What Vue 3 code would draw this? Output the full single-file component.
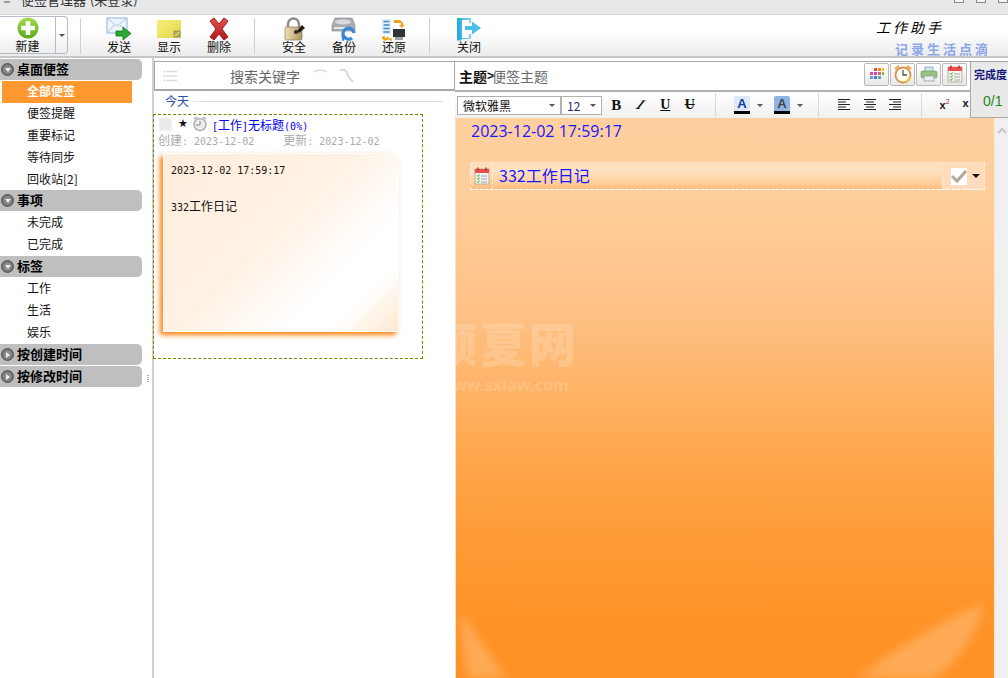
<script setup>
const groups = [
  { title: '桌面便签', open: true, items: ['全部便签', '便签提醒', '重要标记', '等待同步', '回收站[2]'], active: 0, tight: true },
  { title: '事项', open: true, items: ['未完成', '已完成'] },
  { title: '标签', open: true, items: ['工作', '生活', '娱乐'] },
  { title: '按创建时间', open: false, items: [] },
  { title: '按修改时间', open: false, items: [] }
]
</script>

<template>
  <div class="app">
    <header class="titlebar">
      <span class="win-icon"></span>
      <span class="title">便签管理器 (未登录)</span>
      <span class="win-btns"><i></i><i></i><i></i></span>
    </header>

    <div class="toolbar">
      <div class="split">
        <button class="split-main">
          <svg width="24" height="24" viewBox="0 0 24 24">
            <defs><linearGradient id="gn" x1="0" y1="0" x2="0" y2="1"><stop offset="0" stop-color="#a8dc50"/><stop offset="1" stop-color="#5aa818"/></linearGradient></defs>
            <circle cx="12" cy="12" r="11.5" fill="url(#gn)"/>
            <path d="M9.500 4.500h5v5h5v5h-5v5h-5v-5h-5v-5h5z" fill="#fff"/>
          </svg>
          <span>新建</span>
        </button>
        <span class="split-caret"><i class="caret"></i></span>
      </div>
      <span class="sep first"></span>
      <button class="tool">
        <svg width="26" height="24" viewBox="0 0 26 24">
          <rect x="1" y="1" width="20" height="15" fill="#eef4fc" stroke="#8fb0dc"/>
          <path d="M1 1l10 8 10-8M1 16l7-8M21 16l-7-8" fill="none" stroke="#a8c4e8"/>
          <path d="M10 14h7v-4l8 6.500-8 6.500v-4h-7z" fill="#2ea82e" stroke="#0f7a18" stroke-width=".8"/>
        </svg>
        <span>发送</span>
      </button>
      <button class="tool">
        <svg width="26" height="24" viewBox="0 0 26 24">
          <defs><linearGradient id="yl" x1="0" y1="0" x2="1" y2="1"><stop offset="0" stop-color="#f7ef78"/><stop offset="1" stop-color="#e4d64c"/></linearGradient></defs>
          <rect x="1" y="3" width="24" height="18" fill="url(#yl)"/>
          <rect x="18" y="14" width="6" height="6" fill="#b8ad58" stroke="#8a8550" stroke-width=".7"/>
          <path d="M19 19l4-4" stroke="#f5efa0"/>
        </svg>
        <span>显示</span>
      </button>
      <button class="tool">
        <svg width="26" height="24" viewBox="0 0 26 24">
          <defs><linearGradient id="rd" x1="0" y1="0" x2="0" y2="1"><stop offset="0" stop-color="#e85050"/><stop offset="1" stop-color="#b01818"/></linearGradient></defs>
          <path d="M4 4l4-3 5 6 5-6 4 3-6 8 6 8-4 3-5-6-5 6-4-3 6-8z" fill="url(#rd)" stroke="#9a2020" stroke-linejoin="round"/>
        </svg>
        <span>删除</span>
      </button>
      <span class="sep"></span>
      <button class="tool">
        <svg width="26" height="24" viewBox="0 0 26 24">
          <defs><linearGradient id="lk" x1="0" y1="0" x2="1" y2="0"><stop offset="0" stop-color="#f0e0b8"/><stop offset="1" stop-color="#b09464"/></linearGradient></defs>
          <path d="M7 11V7a5.500 5.500 0 0 1 11 0v4" fill="none" stroke="#8c8c88" stroke-width="2.500"/>
          <rect x="4" y="10" width="17" height="13" rx="1.500" fill="url(#lk)" stroke="#8a7858" stroke-width=".7"/>
          <path d="M16 14l5-6 3 3-6 5z" fill="#1c1c1c"/>
          <circle cx="15" cy="15" r="2" fill="#2a2a2a"/>
        </svg>
        <span>安全</span>
      </button>
      <button class="tool">
        <svg width="26" height="24" viewBox="0 0 26 24">
          <path d="M4 1h17l3 7v6H1V8z" fill="#a8acae" stroke="#8c9092" stroke-width=".7"/>
          <ellipse cx="12" cy="5" rx="8" ry="2.500" fill="#d8dadc"/>
          <rect x="3" y="10" width="12" height="2" fill="#e6e8ea"/>
          <path d="M23 16a5.500 5.500 0 1 0-2 5" fill="none" stroke="#3a86d8" stroke-width="3.200"/>
          <path d="M13 15l5-5v7z" fill="#3a86d8" transform="rotate(170 17 16) translate(6 -2)"/>
        </svg>
        <span>备份</span>
      </button>
      <button class="tool">
        <svg width="26" height="24" viewBox="0 0 26 24">
          <rect x="1" y="2" width="9" height="15" fill="#dcecf8"/>
          <path d="M2.500 4.500h6M2.500 8h6M2.500 11.500h6M2.500 15h6" stroke="#3d8ac8" stroke-width="1.500"/>
          <path d="M13 3h6l3 3v2l2-1-3 4-3-3 2 0v-2h-7z" fill="#f0a010"/>
          <path d="M3 19v3h7v1l-1 0 0 0M1 20l3 3 3-3" fill="none" stroke="#f0a010" stroke-width="1.600"/>
          <rect x="12" y="12" width="12" height="8" fill="#303438"/>
          <rect x="14" y="20" width="8" height="3" fill="#9ca0a2"/>
        </svg>
        <span>还原</span>
      </button>
      <span class="sep"></span>
      <button class="tool">
        <svg width="26" height="24" viewBox="0 0 26 24">
          <defs><linearGradient id="dr" x1="0" y1="0" x2="1" y2="0"><stop offset="0" stop-color="#1ea8d8"/><stop offset="1" stop-color="#80d8f0"/></linearGradient></defs>
          <path d="M1 1h14v5h-2V3H6v18h7v-4h2v5H6l-1 1.500H1z" fill="url(#dr)"/>
          <path d="M9 9h7V4.500L25 11l-9 6.500V13H9z" fill="#4cc0e4"/>
        </svg>
        <span>关闭</span>
      </button>
      <div class="brand">
        <div class="brand-a">工作助手</div>
        <div class="brand-b">记录生活点滴</div>
      </div>
    </div>

    <div class="main">
      <aside class="sidebar">
        <section v-for="g in groups" :key="g.title" :class="{ tight: g.tight }">
          <div class="ghead">
            <span class="ball"><i :class="g.open ? 'down' : 'right'"></i></span>
            <b>{{ g.title }}</b>
          </div>
          <div
            v-for="(it, i) in g.items"
            :key="it"
            class="gitem"
            :class="{ active: g.active === i }"
          >{{ it }}</div>
        </section>
      </aside>

      <div class="splitter"><span class="grip"></span></div>

      <section class="list">
        <div class="search">
          <svg class="menu-ic" width="14" height="12" viewBox="0 0 14 12"><path d="M3 1.500h11M3 6h11M3 10.500h11M0 1.500h2M0 6h2M0 10.500h2" stroke="#dcdcdc" stroke-width="1.300"/></svg>
          <span class="search-text">搜索关键字</span>
          <svg class="find-ic" width="42" height="16" viewBox="0 0 42 16"><path d="M1 4q6-4 13 0" fill="none" stroke="#dddddd" stroke-width="1.600"/><path d="M27 2q6-1 7 3t6 9" fill="none" stroke="#d8d8d8" stroke-width="2"/></svg>
        </div>
        <div class="today"><span>今天</span><i></i></div>
        <article class="entry">
          <div class="entry-top">
            <span class="chk"></span>
            <span class="star">★</span>
            <svg width="16" height="16" viewBox="0 0 16 16"><circle cx="8" cy="8.500" r="6" fill="#eee" stroke="#b0b0b0" stroke-width="1.600"/><path d="M8 5v4H4" fill="none" stroke="#888"/><path d="M2 3l3-2M14 3l-3-2" stroke="#bbb" stroke-width="2"/></svg>
            <span class="entry-title"><span class="lat">[</span>工作<span class="lat">]</span>无标题<span class="lat">(0%)</span></span>
          </div>
          <div class="entry-meta">
            <span>创建<span class="lat">: 2023-12-02</span></span>
            <span>更新<span class="lat">: 2023-12-02</span></span>
          </div>
          <div class="note">
            <div class="note-date">2023-12-02 17:59:17</div>
            <div class="note-body"><span class="lat">332</span>工作日记</div>
          </div>
        </article>
      </section>

      <section class="editor">
        <div class="editor-top">
          <div class="editor-bars">
            <div class="subject">
              <span class="crumb"><b>主题</b><b class="gt">&gt;</b><span>便签主题</span></span>
              <div class="sub-btns">
                <button class="sq">
                  <svg width="16" height="16" viewBox="0 0 16 16"><rect x="5" y="2" width="3" height="3" fill="#e84848"/><rect x="9" y="2" width="3" height="3" fill="#f08a20"/><rect x="13" y="2" width="2" height="3" fill="#f0c020"/><rect x="1" y="6" width="3" height="3" fill="#e84890"/><rect x="5" y="6" width="3" height="3" fill="#c048c8"/><rect x="9" y="6" width="3" height="3" fill="#e86060"/><rect x="13" y="6" width="2" height="3" fill="#70c040"/><rect x="1" y="10" width="3" height="3" fill="#50a8e0"/><rect x="5" y="10" width="3" height="3" fill="#8060e0"/><rect x="9" y="10" width="3" height="3" fill="#40b8a0"/></svg>
                </button>
                <button class="sq">
                  <svg width="20" height="20" viewBox="0 0 20 20"><path d="M2 5l4-3M18 5l-4-3" stroke="#e8b060" stroke-width="2.500"/><circle cx="10" cy="11" r="7.500" fill="#fffdf4" stroke="#d89050" stroke-width="1.800"/><path d="M10 6v5h4" fill="none" stroke="#505050" stroke-width="1.300"/><path d="M12 18l5-6 1.500 1.500-5 6z" fill="#f0c040"/></svg>
                </button>
                <button class="sq">
                  <svg width="18" height="16" viewBox="0 0 18 16"><rect x="5" y="1" width="8" height="5" fill="#d0e8f0" stroke="#70a0b0" stroke-width=".7"/><rect x="1" y="5" width="16" height="7" rx="1.500" fill="#98c080" stroke="#78987c" stroke-width=".7"/><rect x="4" y="10" width="10" height="5" fill="#e8eef0" stroke="#909898" stroke-width=".7"/></svg>
                </button>
                <button class="sq">
                  <svg class="cal" width="16" height="18" viewBox="0 0 16 18"><rect x="1" y="2" width="14" height="15" fill="#f4f2ea" stroke="#a09888" stroke-width=".7"/><rect x="1" y="2" width="14" height="4" fill="#e85050"/><path d="M4 0.500v3M12 0.500v3" stroke="#b03030" stroke-width="1.400"/><path d="M3 8.500l1 1 1.500-2M3 11.500l1 1 1.500-2M3 14.500l1 1 1.500-2" fill="none" stroke="#28a028"/><path d="M7 9h6M7 12h6M7 15h6" stroke="#a0a8b0"/></svg>
                </button>
              </div>
            </div>
            <div class="format">
              <div class="select font"><span>微软雅黑</span><i class="caret"></i></div>
              <div class="select size"><span>12</span><i class="caret"></i></div>
              <span class="fmt fb">B</span>
              <span class="fmt fi"><span>I</span></span>
              <span class="fmt fu">U</span>
              <span class="fmt fs">U</span>
              <span class="vsep"></span>
              <span class="color-a"><b>A</b></span><i class="caret gap"></i>
              <span class="color-a shade"><b>A</b></span><i class="caret gap"></i>
              <span class="vsep two"></span>
              <svg class="al" width="12" height="12" viewBox="0 0 12 12"><path d="M0 .5h12M0 3h8M0 5.500h12M0 8h8M0 10.500h12" stroke="#222"/></svg>
              <svg class="al" width="12" height="12" viewBox="0 0 12 12"><path d="M0 .5h12M2 3h8M0 5.500h12M2 8h8M0 10.500h12" stroke="#222"/></svg>
              <svg class="al" width="12" height="12" viewBox="0 0 12 12"><path d="M0 .5h12M4 3h8M0 5.500h12M4 8h8M0 10.500h12" stroke="#222"/></svg>
              <span class="vsep three"></span>
              <span class="sup">x<sup>2</sup></span>
              <span class="sub">x</span>
            </div>
          </div>
          <div class="done">
            <div class="done-title">完成度</div>
            <div class="done-num">0/1</div>
          </div>
        </div>

        <div class="editor-body">
          <div class="canvas">
            <svg class="glow" width="540" height="80" viewBox="0 0 540 80" aria-hidden="true">
              <defs><filter id="bl" x="-30%" y="-30%" width="160%" height="160%"><feGaussianBlur stdDeviation="5"/></filter></defs>
              <path d="M4 14Q30 50 50 80L12 80Q6 45 4 14z" fill="#ffc890" opacity=".45" filter="url(#bl)"/>
              <path d="M526 6Q525 40 480 80L402 80Q450 40 526 6z" fill="#ffc890" opacity=".45" filter="url(#bl)"/>
            </svg>
            <div class="mark">
              <div class="mark-cn">硕夏网</div>
              <div class="mark-en">www.sxiaw.com</div>
            </div>
            <div class="date">2023-12-02 17:59:17</div>
            <div class="task">
              <span class="task-ic">
                <svg width="16" height="18" viewBox="0 0 16 18"><rect x="1" y="2" width="14" height="15" fill="#f4f2ea" stroke="#a09888" stroke-width=".7"/><rect x="1" y="2" width="14" height="4" fill="#e85050"/><path d="M4 0.500v3M12 0.500v3" stroke="#b03030" stroke-width="1.400"/><path d="M3 8.500l1 1 1.500-2M3 11.500l1 1 1.500-2M3 14.500l1 1 1.500-2" fill="none" stroke="#28a028"/><path d="M7 9h6M7 12h6M7 15h6" stroke="#a0a8b0"/></svg>
              </span>
              <span class="task-text">332工作日记</span>
              <span class="task-check">
                <span class="check-box"><svg width="16" height="16" viewBox="0 0 16 16"><path d="M1 8l5 5 9-10" fill="none" stroke="#b0a89c" stroke-width="3"/></svg></span>
                <i class="caret dark"></i>
              </span>
            </div>
          </div>
          <div class="scroll"><svg width="10" height="7" viewBox="0 0 10 7"><path d="M1 6l4-4 4 4" fill="none" stroke="#c4c4c4" stroke-width="2"/></svg></div>
        </div>
      </section>
    </div>
  </div>
</template>

<style>
html, body { margin: 0; background: #fff; overflow: hidden; }
</style>

<style scoped>
.app {
  width: 1008px; height: 678px; display: flex; flex-direction: column; overflow: hidden;
  font-family: "Noto Sans CJK SC", "Liberation Sans", sans-serif; font-size: 12px; color: #111; background: #fff;
}
button { border: 0; padding: 0; background: none; font: inherit; color: inherit; }
.lat { font-family: "DejaVu Sans Mono", monospace; font-size: 10px; }

.titlebar {
  height: 15px; flex: none; display: flex; background: #e7e8e9; border-bottom: 1px solid #d4d6d8;
  box-sizing: border-box; overflow: hidden; position: relative;
}
.win-icon { width: 6px; height: 2px; margin: 1px 0 0 4px; background: #9a9a9a; }
.title { margin: -10px 0 0 11px; font-size: 13px; line-height: 20px; color: #333; word-spacing: 1px; }
.win-btns { margin-left: auto; display: flex; gap: 12px; }
.win-btns i { width: 8px; height: 2px; border: 1px solid #888; border-top: 0; background: #f4f4f4; }

.toolbar {
  height: 40px; flex: none; display: flex; align-items: stretch; position: relative; padding-top: 1px;
  background: linear-gradient(#fff 0, #fff 35%, #ececec 100%);
  border-bottom: 2px solid #c4c6c8; box-sizing: content-box;
}
.split {
  width: 68px; height: 38px; box-sizing: border-box; display: flex; border: 1px solid #b4bccb; border-left: 0;
  border-radius: 0 4px 4px 0;
}
.split-main { width: 56px; display: flex; flex-direction: column; align-items: center; border-right: 1px solid #b4bccb; }
.split-main span { line-height: 14px; }
.split-caret { flex: 1; display: flex; align-items: center; justify-content: center; }
.caret { width: 0; height: 0; border: 3px solid transparent; border-top: 3px solid #555; border-bottom: 0; display: inline-block; flex: none; }
.sep { width: 1px; height: 36px; background: #ccd0d4; margin: 2px 14px 0 10px; flex: none; }
.sep.first { margin: 2px 13px 0 12px; }
.tool { width: 50px; display: flex; flex-direction: column; align-items: center; padding-top: 1px; }
.tool span { line-height: 14px; margin-top: -1px; }
.brand { position: absolute; right: 0; top: 0; width: 132px; }
.brand-a { margin-top: 2px; font-size: 14px; line-height: 20px; letter-spacing: 3px; color: #000; font-style: italic; }
.brand-b { margin: 4px 0 0 19px; font-size: 13px; line-height: 15px; letter-spacing: 3px; font-weight: 700; color: #8aa6ea; }

.main { flex: 1; display: flex; min-height: 0; }
.sidebar { width: 143px; flex: none; padding-top: 1px; box-sizing: border-box; }
.sidebar .tight { margin-bottom: -1px; }
.ghead {
  height: 21px; width: 142px; margin-bottom: 1px; display: flex; align-items: center; gap: 3px; background: #bfbfbf;
  border-radius: 0 5px 5px 0; font-size: 13px; color: #000;
}
.ghead b { line-height: 19px; margin-top: -2px; }
.ball {
  width: 11px; height: 11px; margin-left: 1px; border-radius: 50%; display: flex; align-items: center; justify-content: center;
  background: #8a8a8a; border: 1px solid #555; box-shadow: inset 0 0 2px #333;
}
.ball .down { border: 3px solid transparent; border-top: 4px solid #eee; border-bottom: 0; }
.ball .right { border: 3px solid transparent; border-left: 4px solid #eee; border-right: 0; }
.gitem { height: 22px; line-height: 20px; padding-left: 27px; box-sizing: border-box; }
.gitem.active { width: 130px; margin-left: 2px; padding-left: 25px; background: #fe982f; color: #fff; font-weight: 700; }

.splitter { width: 9px; flex: none; position: relative; }
.grip { position: absolute; right: 3px; top: 317px; width: 2px; height: 8px; background: repeating-linear-gradient(#aaa 0 1px, transparent 1px 2px); }

.list { width: 303px; flex: none; border-left: 2px solid #d0d0d0; box-sizing: border-box; padding-top: 3px; }
.search {
  height: 30px; box-sizing: border-box; border: 1px solid #a8a8a8; border-bottom-width: 2px; display: flex; align-items: center;
}
.menu-ic { margin-left: 8px; }
.search-text { margin-left: 53px; font-size: 14px; color: #666; }
.find-ic { margin-left: 13px; }
.today { display: flex; align-items: center; height: 21px; padding-left: 11px; color: #2a4cb0; }
.today span { line-height: 16px; margin-top: -2px; }
.today i { flex: none; width: 250px; height: 1px; margin-left: 4px; background: #d8e0ea; }
.entry { width: 270px; height: 245px; margin: 2px 0 0 -1px; box-sizing: border-box; border: 1px dashed #808000; }
.entry-top { display: flex; align-items: center; height: 18px; }
.chk { width: 11px; height: 11px; margin-left: 5px; background: #eaeaea; border: 1px solid #f0f0f0; }
.star { width: 11px; margin-left: 6px; font-size: 11px; line-height: 12px; font-family: "DejaVu Sans", sans-serif; color: #111; }
.entry-top svg { margin-left: 3px; }
.entry-title { margin-left: 4px; color: #0000f0; white-space: nowrap; }
.entry-meta { display: flex; gap: 29px; padding-left: 4px; height: 18px; line-height: 14px; color: #aaa; }
.note {
  width: 236px; height: 179px; margin: 2px 0 0 9px; padding: 8px 0 0 7px; box-sizing: border-box;
  background:
    linear-gradient(135deg, transparent 84%, #ffe6cc 100%),
    linear-gradient(135deg, #ffeddc 0, #fff1e4 45%, #fff 72%);
  border: 1px solid #fff;
  box-shadow: -3px 3px 5px #ff8410;
}
.note-date { font-family: "DejaVu Sans Mono", monospace; font-size: 10px; line-height: 18px; color: #111; }
.note-body { margin-top: 17px; line-height: 18px; font-size: 12px; color: #111; }

.editor { flex: 1; min-width: 0; display: flex; flex-direction: column; }
.editor-top { display: flex; height: 57px; margin-top: 3px; flex: none; }
.editor-bars { width: 515px; flex: none; display: flex; flex-direction: column; overflow: hidden; }
.subject {
  height: 31px; box-sizing: border-box; flex: none; display: flex; align-items: center; padding-left: 4px;
  border-top: 1px solid #a8a8a8; border-bottom: 2px solid #b0b0b0;
}
.crumb { display: flex; align-items: center; color: #6a6a6a; font-size: 14px; }
.crumb b { color: #111; }
.crumb .gt { font-family: "Liberation Sans", sans-serif; font-size: 12px; margin-right: -2px; }
.sub-btns { margin: -4px 0 0 auto; display: flex; gap: 1px; padding-right: 3px; }
.sq {
  width: 25px; height: 23px; display: flex; align-items: center; justify-content: center; border: 1px solid #b8b8b8; border-radius: 2px;
  background: linear-gradient(#fff, #e8e8e8); box-sizing: border-box;
}
.format { flex: 1; display: flex; align-items: center; padding-left: 2px; background: linear-gradient(#fff, #f0f0f0); }
.select {
  height: 19px; box-sizing: border-box; border: 1px solid #b0b0b0; display: flex; align-items: center; justify-content: space-between; padding: 0 5px; background: #fff;
}
.select.font { width: 104px; }
.select.size { width: 41px; color: #1a2a70; }
.select span { white-space: nowrap; }
.fmt { width: 24.500px; text-align: center; font-family: "Liberation Serif", serif; font-weight: 700; font-size: 14px; color: #111; flex: none; }
.fb { margin-left: 2px; font-size: 15px; }
.fi span { display: inline-block; transform: skewX(-38deg); font-size: 13px; }
.fu { text-decoration: underline; }
.fs { text-decoration: line-through; }
.vsep { width: 1px; height: 24px; background: #d8d8d8; margin-left: 13px; margin-right: 18px; flex: none; }
.color-a { width: 16px; height: 18px; box-sizing: border-box; border-bottom: 3px solid #000; background: #dce8f8; display: flex; align-items: center; justify-content: center; border-radius: 2px 2px 0 0; flex: none; }
.color-a b { color: #123a9c; font-size: 13px; font-family: "Liberation Sans", sans-serif; line-height: 14px; }
.color-a.shade { background: #8fb4e4; }
.color-a.shade b { color: #444; }
.caret.gap { margin: 0 9px 0 7px; }
.caret.gap + .color-a { margin-left: 2px; }
.vsep.two { margin: 0 19px 0 6px; }
.al { margin-right: 13.500px; flex: none; }
.vsep.three { margin: 0 18px 0 6px; }
.sup { width: 13px; font-family: "Liberation Sans", sans-serif; font-weight: 700; font-size: 11px; flex: none; line-height: 12px; color: #111; }
.sup sup { font-size: 7px; color: #c02020; line-height: 0; font-weight: 400; }
.sub { margin-left: 10px; font-family: "Liberation Sans", sans-serif; font-weight: 700; font-size: 11px; margin-top: -5px; color: #111; }
.done { flex: 1; background: #e9e9e9; border: 1px solid #a8a8a8; border-right: 0; box-sizing: border-box; overflow: hidden; }
.done-title { margin-top: 5px; padding-left: 3px; font-size: 11px; line-height: 14px; font-weight: 700; color: #14147a; white-space: nowrap; }
.done-num { margin-top: 11px; padding-left: 12px; font-size: 14px; line-height: 18px; color: #1a8a1a; font-family: "Liberation Sans", sans-serif; }

.editor-body { flex: 1; display: flex; min-height: 0; }
.canvas {
  width: 540px; flex: none; position: relative; overflow: hidden; box-sizing: border-box; padding: 3px 0 0 15px;
  border-left: 1px solid #f8e0c8; border-right: 1px solid #ffe6cc;
  background: linear-gradient(#ffcf9f 0, #ffce9c 14%, #fec083 36%, #ffa951 58%, #fe9a35 76%, #ff9226 92%, #ff9226 100%);
}
.glow { position: absolute; left: 0; bottom: 0; }
.mark { position: absolute; left: -25px; top: 195px; color: #fff; opacity: .17; width: 146px; text-align: center; }
.mark-cn { font-size: 47px; line-height: 58px; font-weight: 900; white-space: nowrap; letter-spacing: 2px; }
.mark-en { font-family: "Open Sans", sans-serif; font-size: 16px; font-weight: 700; line-height: 20px; margin-top: 4px; white-space: nowrap; }
.date { position: relative; font-family: "Open Sans", sans-serif; font-size: 16px; line-height: 20px; color: #1616ff; }
.task {
  position: relative; width: 515px; height: 28px; margin: 21px 0 0 -1px; box-sizing: border-box; display: flex; align-items: center;
  background: linear-gradient(#ffdcb8 0, #ffe2c4 30%, #ffd09e 72%, #ffbe80 100%);
  border-top: 1px solid #ffe4c8; border-bottom: 1px dashed #fff;
}
.task-ic { width: 23px; height: 100%; display: flex; align-items: center; justify-content: center; box-sizing: border-box; border-left: 1px dashed #ffeedd; border-right: 1px dashed #ffeedd; }
.task-text { margin: -2px 0 0 6px; font-size: 16px; color: #1616ff; line-height: 24px; white-space: nowrap; }
.task-check { margin-left: auto; width: 43px; height: 100%; display: flex; align-items: center; box-sizing: border-box; border-left: 1px dashed #ffeedd; border-right: 1px dashed #ffeedd; background: #ffdcbb; padding-left: 8px; }
.check-box { width: 16px; height: 17px; background: #fff; display: flex; align-items: center; }
.caret.dark { margin-left: 5px; border-width: 4px; border-top-color: #111; border-bottom: 0; }
.scroll { flex: 1; background: #f0f0f0; display: flex; justify-content: center; padding-top: 9px; box-sizing: border-box; }
.scroll svg { display: block; }
</style>
